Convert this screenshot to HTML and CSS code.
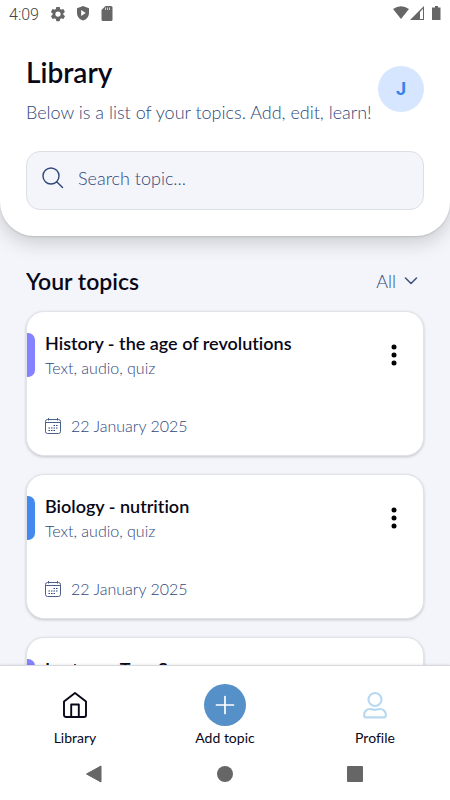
FILE: index.html
```html
<!DOCTYPE html>
<html lang="en">
<head>
<meta charset="utf-8">
<meta name="viewport" content="width=device-width, initial-scale=1">
<title>Library</title>
<link rel="stylesheet" href="styles.css">
</head>
<body>
<div class="app">
  <header class="header">
    <div class="status">
      <span class="status-time">4:09</span>
      <svg class="status-icon" width="18" height="18" viewBox="0 0 24 24" aria-hidden="true"><path fill="#666" d="M19.1 12.9a7 7 0 0 0 0-1.8l2-1.6c.2-.1.2-.4.1-.6l-1.900-3.300c-.1-.2-.4-.3-.6-.2l-2.400 1a7 7 0 0 0-1.600-1L14.400 2.900a.5.5 0 0 0-.5-.4h-3.800a.5.500 0 0 0-.5.4l-.4 2.500a7 7 0 0 0-1.600 1l-2.400-1c-.2-.1-.5 0-.6.200L2.700 8.900c-.1.200-.1.500.1.600l2 1.600a7 7 0 0 0 0 1.800l-2 1.600c-.2.100-.2.400-.1.600l1.900 3.300c.1.200.4.300.6.200l2.400-1a7 7 0 0 0 1.600 1l.4 2.500c0 .2.200.4.500.4h3.800c.2 0 .5-.2.500-.4l.4-2.500a7 7 0 0 0 1.600-1l2.400 1c.2.100.5 0 .6-.2l1.900-3.300c.1-.2.100-.5-.1-.6zM12 15.500a3.500 3.500 0 1 1 0-7 3.500 3.500 0 0 1 0 7z"/></svg>
      <svg class="status-icon" width="16" height="18" viewBox="0 0 16 18" aria-hidden="true"><path fill="#666" d="M8 1l6 2.300v4.700c0 3.600-2.600 6.600-6 7.500-3.400-.9-6-3.900-6-7.500V3.300z"/><path fill="#fff" d="M6.200 5v6l4.500-3z"/></svg>
      <svg class="status-icon" width="16" height="18" viewBox="0 0 16 18" aria-hidden="true"><path fill="#666" d="M6.500 1H12a1.500 1.500 0 0 1 1.500 1.500v12A1.500 1.500 0 0 1 12 16H4a1.500 1.500 0 0 1-1.500-1.500V5z"/><path stroke="#ccc" d="M6.500 2.500V5M8.500 2.500V5M10.500 2.500V5"/></svg>
      <svg class="status-signal" width="50" height="18" viewBox="0 0 50 18" aria-hidden="true"><path fill="#666" d="M1 4Q9-1.500 17 4L9 14z"/><path fill="#666" d="M32 1v14H18z"/><path fill="#fff" d="M28 7l3-3.200V14h-3z"/><path fill="#666" d="M43 1h3v1.500h2.500V15H40V2.500h3z"/></svg>
    </div>
    <div class="intro">
      <div class="intro-text">
        <h1 class="title">Library</h1>
        <p class="lead">Below is a list of your topics. Add, edit, learn!</p>
      </div>
      <button class="avatar" type="button" aria-label="Account J">J</button>
    </div>
    <label class="search">
      <svg width="22" height="22" viewBox="0 0 22 22" fill="none" stroke="#2f477a" stroke-width="1.400" stroke-linecap="round" aria-hidden="true"><circle cx="9" cy="9" r="8"/><path d="M14.700 14.700L20.500 20.500"/></svg>
      <input class="search-input" type="search" placeholder="Search topic..." aria-label="Search topic">
    </label>
  </header>

  <main class="content">
    <div class="section-head">
      <h2 class="section-title">Your topics</h2>
      <button class="filter" type="button">All
        <svg width="14" height="8" viewBox="0 0 14 8" fill="none" stroke="#3f5580" stroke-width="1.600" stroke-linecap="round" stroke-linejoin="round" aria-hidden="true"><path d="M1.500 1L7 6.500 12.500 1"/></svg>
      </button>
    </div>

    <article class="card">
      <span class="marker"></span>
      <div class="card-body">
        <h3 class="card-title">History - the age of revolutions</h3>
        <p class="card-types">Text, audio, quiz</p>
        <p class="card-date"><svg class="calendar" width="16" height="16" viewBox="0 0 16 16" aria-hidden="true"><use href="#calendar"/></svg>22 January 2025</p>
      </div>
      <button class="more" type="button" aria-label="More options"><svg width="6" height="22" viewBox="0 0 6 22" aria-hidden="true"><use href="#dots"/></svg></button>
    </article>

    <article class="card">
      <span class="marker marker-blue"></span>
      <div class="card-body">
        <h3 class="card-title">Biology - nutrition</h3>
        <p class="card-types">Text, audio, quiz</p>
        <p class="card-date"><svg class="calendar" width="16" height="16" viewBox="0 0 16 16" aria-hidden="true"><use href="#calendar"/></svg>22 January 2025</p>
      </div>
      <button class="more" type="button" aria-label="More options"><svg width="6" height="22" viewBox="0 0 6 22" aria-hidden="true"><use href="#dots"/></svg></button>
    </article>

    <article class="card">
      <span class="marker"></span>
      <div class="card-body">
        <h3 class="card-title">Lecture - Tom Sawyer</h3>
      </div>
    </article>
  </main>

  <footer class="footer">
    <nav class="tabs">
      <a class="tab" href="#library">
        <span class="tab-icon"><svg width="24" height="26" viewBox="0 0 24 26" fill="none" stroke="#080818" stroke-width="1.900" stroke-linejoin="round" aria-hidden="true"><path d="M1 9.500L12 1l11 8.500V23a2 2 0 0 1-2 2H3a2 2 0 0 1-2-2z"/><path d="M8.200 25V12.500h7.600V25"/></svg></span>
        Library
      </a>
      <a class="tab" href="#add">
        <span class="tab-icon tab-add"><svg width="20" height="20" viewBox="0 0 20 20" fill="none" stroke="#fff" stroke-width="1.700" stroke-linecap="round" aria-hidden="true"><path d="M10 1.500v17M1.500 10h17"/></svg></span>
        Add topic
      </a>
      <a class="tab" href="#profile">
        <span class="tab-icon"><svg width="24" height="28" viewBox="0 0 24 28" fill="none" stroke="#b8d9ef" stroke-width="2.200" stroke-linejoin="round" aria-hidden="true"><circle cx="12" cy="8.500" r="6.500"/><path d="M7 18c2 0 3 .8 5 .8s3-.8 5-.8c3.300 0 5.800 2.500 5.800 5.500V25a1.300 1.300 0 0 1-1.300 1.300h-19A1.300 1.300 0 0 1 1.200 25v-1.500c0-3 2.500-5.500 5.800-5.500z"/></svg></span>
        Profile
      </a>
    </nav>
    <div class="system">
      <button class="system-button" type="button" aria-label="Back"><svg width="18" height="18" viewBox="0 0 18 18" aria-hidden="true"><path fill="#666" stroke="#666" stroke-linejoin="round" d="M1.500 9L16 1v16z"/></svg></button>
      <button class="system-button" type="button" aria-label="Home"><svg width="18" height="18" viewBox="0 0 18 18" aria-hidden="true"><circle cx="9" cy="9" r="8" fill="#666"/></svg></button>
      <button class="system-button" type="button" aria-label="Recent apps"><svg width="18" height="18" viewBox="0 0 18 18" aria-hidden="true"><rect x="1" y="1" width="16" height="16" rx="1" fill="#666"/></svg></button>
    </div>
  </footer>
</div>

<svg class="symbols" aria-hidden="true">
  <symbol id="calendar" viewBox="0 0 16 16">
    <g fill="none" stroke="#4a6088">
      <rect x=".5" y="1.500" width="15" height="14" rx="2"/>
      <path d="M.5 4.500h15M3.500 0v2.500M12.500 0v2.500"/>
    </g>
    <path d="M8.500 7.500H10M11 7.500h1.500M3.500 10H5M6 10h1.500M8.500 10H10M11 10h1.500M3.500 12.500H5M6 12.500h1.500M8.500 12.500H10" stroke="#2f477a" stroke-width="1.200" fill="none"/>
  </symbol>
  <symbol id="dots" viewBox="0 0 6 22">
    <circle cx="3" cy="3" r="2.500"/><circle cx="3" cy="11" r="2.500"/><circle cx="3" cy="19" r="2.500"/>
  </symbol>
</svg>
</body>
</html>
```
FILE: styles.css
```css
* {
  box-sizing: border-box;
}

body,
h1,
h2,
h3,
p {
  margin: 0;
}

body {
  font-family: Lato, "Open Sans", sans-serif;
  font-variant-ligatures: none;
  color: #080818;
  background: #f4f5fa;
}

button {
  padding: 0;
  border: 0;
  background: none;
  font: inherit;
  color: inherit;
}

svg {
  display: block;
  flex: none;
}

.symbols {
  position: absolute;
  width: 0;
  height: 0;
}

.app {
  display: flex;
  flex-direction: column;
  height: 100vh;
  overflow: hidden;
}

.header {
  position: relative;
  z-index: 1;
  flex: none;
  padding: 0 26px 26px;
  background: #fff;
  border-radius: 0 0 34px 34px;
  box-shadow: 0 1px 2px rgba(0, 0, 0, 0.12), 0 6px 20px rgba(0, 0, 0, 0.18);
}

.status {
  display: flex;
  align-items: center;
  gap: 8px;
  height: 28px;
  margin: 0 -18px 0 -17px;
}

.status-time {
  width: 32px;
  font-family: Roboto, sans-serif;
  font-size: 16px;
  font-weight: 300;
  color: #444;
}

.status-signal {
  margin-left: auto;
}

.intro {
  display: flex;
  align-items: center;
  height: 123px;
  padding-bottom: 2px;
}

.intro-text {
  flex: 1;
  min-width: 0;
  white-space: nowrap;
}

.title {
  font-size: 28px;
  line-height: 36px;
  font-weight: 600;
}

.lead {
  margin-top: 10px;
  font-size: 18px;
  line-height: 24px;
  font-weight: 300;
  color: #2f477a;
}

.avatar {
  flex: none;
  width: 46px;
  height: 46px;
  border-radius: 50%;
  background: #d6e6ff;
  color: #3582ea;
  font-family: Roboto, sans-serif;
  font-size: 18px;
  font-weight: 700;
}

.search {
  display: flex;
  align-items: center;
  gap: 14px;
  height: 59px;
  padding: 0 15px 6px;
  border: 1px solid #dcdfe4;
  border-radius: 14px;
  background: #f4f5fa;
}

.search-input {
  flex: 1;
  min-width: 0;
  padding: 0;
  border: 0;
  outline: 0;
  background: none;
  font: inherit;
  font-size: 18px;
  font-weight: 300;
  color: #2f477a;
}

.search-input::placeholder {
  color: #2f477a;
  opacity: 1;
}

.content {
  flex: 1;
  min-height: 0;
  padding: 28px 26px 0;
  overflow: hidden;
}

.section-head {
  display: flex;
  align-items: center;
  justify-content: space-between;
  height: 34px;
  margin-bottom: 13px;
}

.section-title {
  font-size: 23px;
  font-weight: 600;
}

.filter {
  display: flex;
  align-items: center;
  gap: 8px;
  padding-right: 6px;
  font-size: 18px;
  font-weight: 300;
  color: #2f477a;
}

.card {
  display: flex;
  height: 145px;
  margin-bottom: 18px;
  border: 1px solid #e2e3e8;
  border-radius: 18px;
  background: #fff;
  box-shadow: 0 1px 3px rgba(0, 0, 0, 0.2);
}

.marker {
  flex: none;
  width: 8px;
  height: 44px;
  margin-top: 21px;
  border-radius: 0 7px 7px 0;
  background: #8582ff;
}

.marker-blue {
  background: #4489ee;
}

.card-body {
  flex: 1;
  padding: 19px 0 0 10px;
}

.card-title {
  font-size: 18px;
  line-height: 24px;
  font-weight: 600;
}

.card-types {
  font-size: 16px;
  line-height: 26px;
  font-weight: 300;
  color: #2f477a;
}

.card-date {
  display: flex;
  align-items: center;
  gap: 10px;
  margin-top: 32px;
  font-size: 16px;
  line-height: 26px;
  font-weight: 300;
  color: #2f477a;
}

.more {
  flex: none;
  width: 30px;
  height: 44px;
  margin: 21px 14px 0 0;
  display: flex;
  align-items: center;
  justify-content: center;
}

.footer {
  position: relative;
  flex: none;
  background: #fff;
  border-top: 1px solid #d8d9dc;
  box-shadow: 0 0 3px rgba(0, 0, 0, 0.12);
}

.tabs {
  display: grid;
  grid-template-columns: repeat(3, 1fr);
  padding-top: 18px;
}

.tab {
  display: flex;
  flex-direction: column;
  align-items: center;
  gap: 2px;
  font-size: 14px;
  line-height: 20px;
  color: #080818;
  text-decoration: none;
}

.tab-icon {
  display: flex;
  align-items: center;
  justify-content: center;
  width: 42px;
  height: 42px;
}

.tab-add {
  border-radius: 50%;
  background: #5590c8;
}

.system {
  display: flex;
  justify-content: space-between;
  padding: 17px 84px 17px 85px;
}

.system-button {
  width: 20px;
  height: 18px;
}
```
